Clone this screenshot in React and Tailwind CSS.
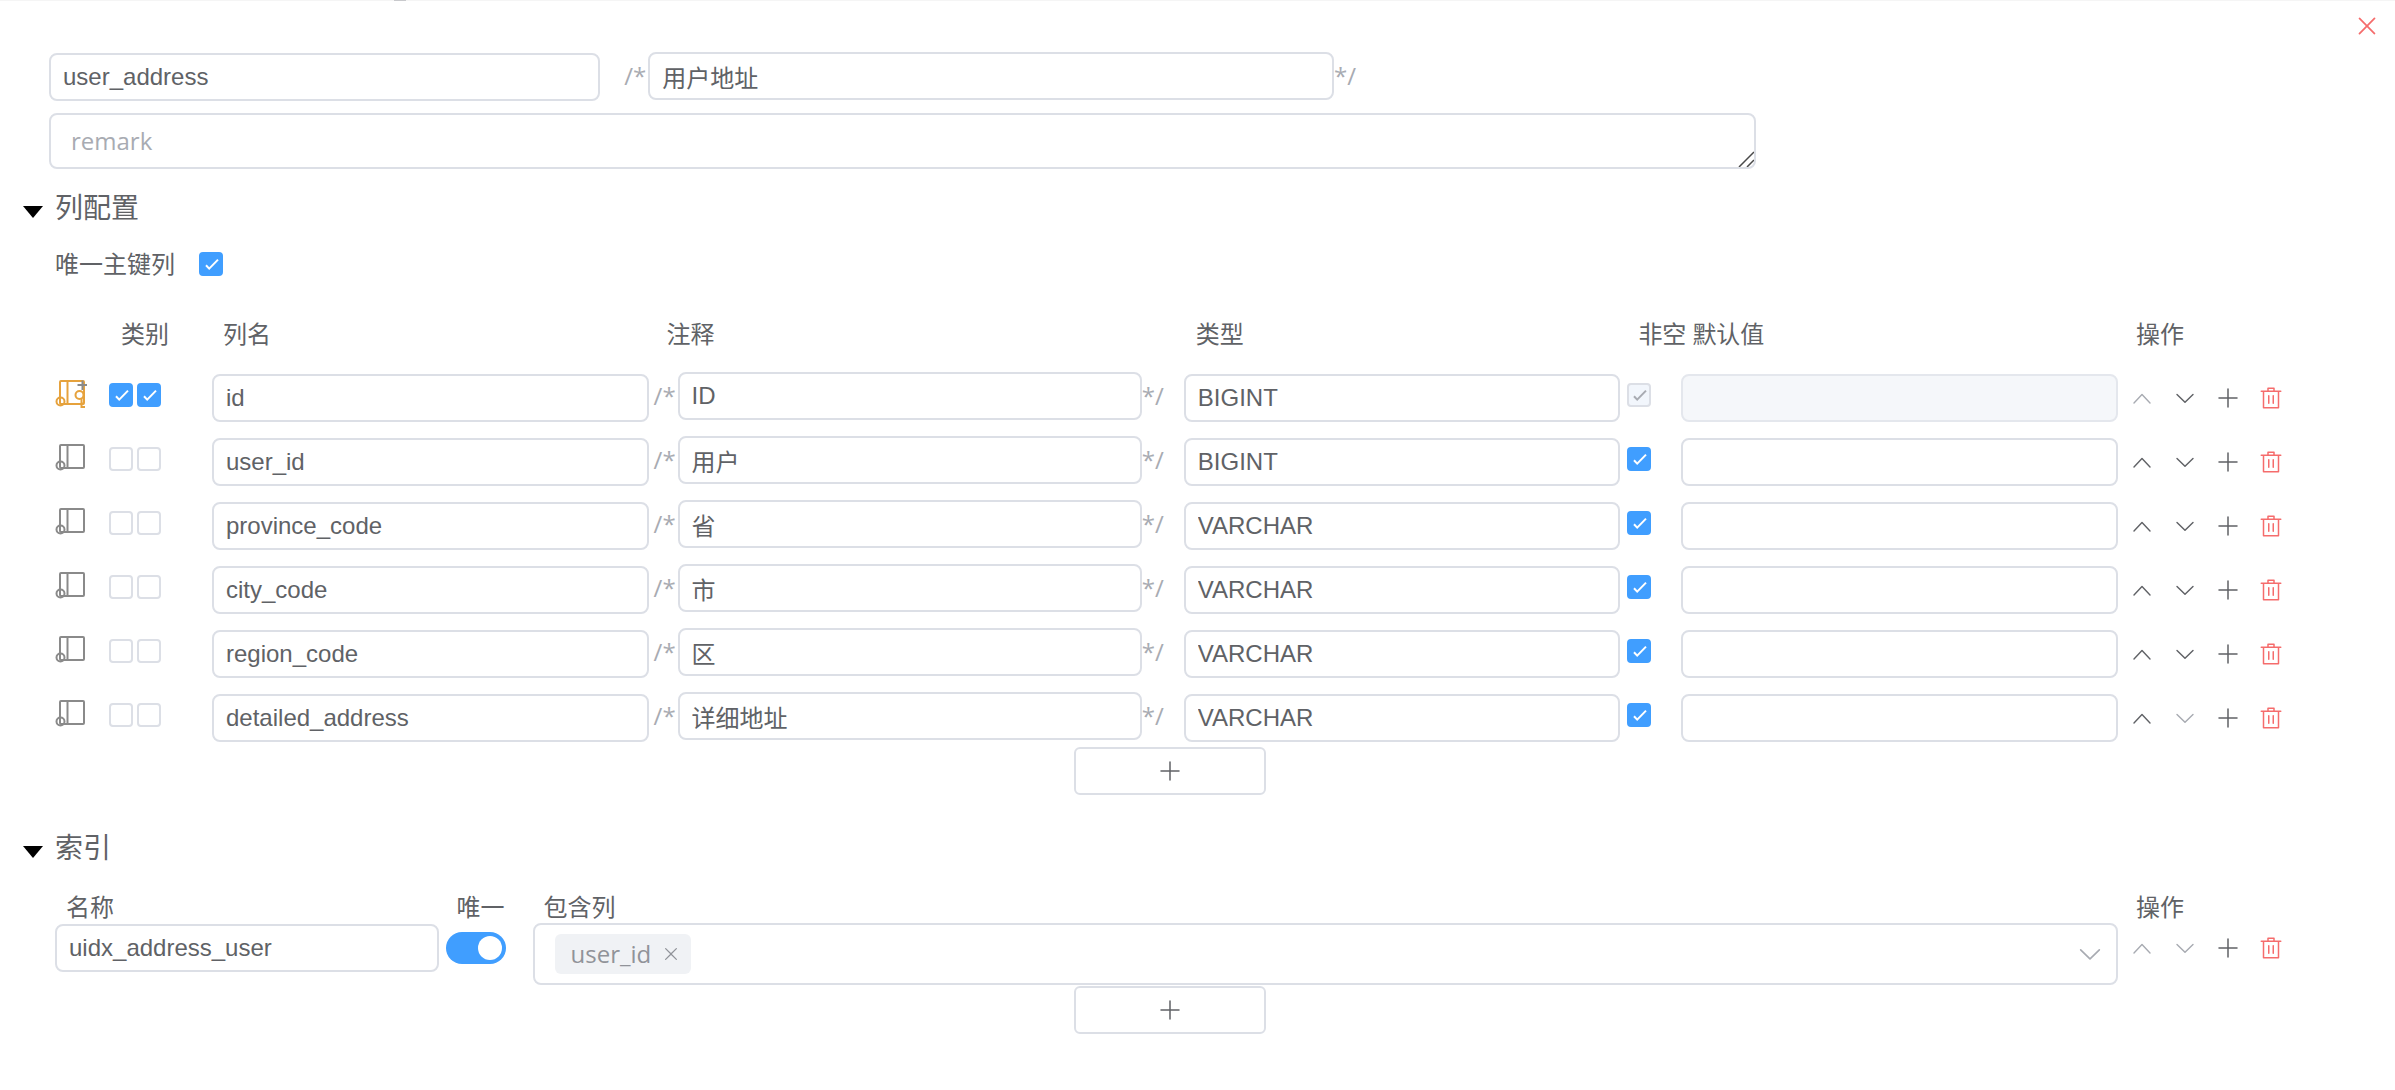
import { useState } from "react";

const ICONS = {
  up: "m488.832 344.32-339.84 356.672a32 32 0 0 0 0 44.16l.384.384a29.44 29.44 0 0 0 42.688 0l320-335.872 319.872 335.872a29.44 29.44 0 0 0 42.688 0l.384-.384a32 32 0 0 0 0-44.16L535.168 344.32a32 32 0 0 0-46.336 0z",
  down: "M831.872 340.864 512 652.672 192.128 340.864a30.592 30.592 0 0 0-42.752 0 29.12 29.12 0 0 0 0 41.6L489.664 714.24a32 32 0 0 0 44.672 0l340.288-331.712a29.12 29.12 0 0 0 0-41.728 30.592 30.592 0 0 0-42.752 0z",
  plus: "M480 480V128a32 32 0 0 1 64 0v352h352a32 32 0 1 1 0 64H544v352a32 32 0 1 1-64 0V544H128a32 32 0 0 1 0-64h352z",
  trash: "M160 256H96a32 32 0 0 1 0-64h256V95.936a32 32 0 0 1 32-32h256a32 32 0 0 1 32 32V192h256a32 32 0 1 1 0 64h-64v672a32 32 0 0 1-32 32H192a32 32 0 0 1-32-32V256zm448-64v-64H416v64h192zM224 896h576V256H224v640zm192-128a32 32 0 0 1-32-32V416a32 32 0 0 1 64 0v320a32 32 0 0 1-32 32zm192 0a32 32 0 0 1-32-32V416a32 32 0 0 1 64 0v320a32 32 0 0 1-32 32z",
  close: "M764.288 214.592 512 466.88 259.712 214.592a31.936 31.936 0 0 0-45.12 45.12L466.752 512 214.528 764.224a31.936 31.936 0 1 0 45.12 45.184L512 557.184l252.288 252.288a31.936 31.936 0 0 0 45.12-45.12L557.12 512.064l252.288-252.352a31.936 31.936 0 1 0-45.12-45.184z",
};

const COLUMNS = [
  { name: "id", comment: "ID", type: "BIGINT", primary: true },
  { name: "user_id", comment: "用户", type: "BIGINT" },
  { name: "province_code", comment: "省", type: "VARCHAR" },
  { name: "city_code", comment: "市", type: "VARCHAR" },
  { name: "region_code", comment: "区", type: "VARCHAR" },
  { name: "detailed_address", comment: "详细地址", type: "VARCHAR" },
];

function Icon({ name, className }) {
  return (
    <svg viewBox="0 0 1024 1024" fill="currentColor" aria-hidden="true" className={className}>
      <path d={ICONS[name]} />
    </svg>
  );
}

function TextInput({ label, value, disabled }) {
  return (
    <input
      type="text"
      aria-label={label}
      defaultValue={value}
      disabled={disabled}
      className="block h-12 w-full min-w-0 rounded-lg border-2 border-[#dcdfe6] bg-white px-3 font-['Liberation_Sans','Noto_Sans_CJK_SC',sans-serif] text-2xl text-[#606266] outline-none focus:border-[#409eff] disabled:border-[#e4e7ed] disabled:bg-[#f5f7fa]"
    />
  );
}

function CommentInput({ label, value }) {
  return (
    <div className="flex items-center text-2xl leading-8 text-[#a8abb2]">
      <span className="w-6 shrink-0">/*</span>
      <TextInput label={label} value={value} />
      <span className="w-6 shrink-0">*/</span>
    </div>
  );
}

function Checkbox({ label, id, checked, disabled }) {
  return (
    <span className="relative inline-block size-6 shrink-0 align-middle">
      <input
        type="checkbox"
        id={id}
        aria-label={label}
        defaultChecked={checked}
        disabled={disabled}
        className="peer block size-6 appearance-none rounded-sm border-2 border-[#dcdfe6] bg-white checked:border-[#409eff] checked:bg-[#409eff] disabled:border-[#dcdfe6] disabled:bg-[#f2f6fc]"
      />
      <svg
        viewBox="0 0 24 24"
        fill="none"
        stroke="currentColor"
        strokeWidth="2"
        aria-hidden="true"
        className="pointer-events-none absolute inset-0 hidden size-6 text-white peer-checked:block peer-disabled:text-[#a8abb2]"
      >
        <path d="M7 13.2 10.2 16.6 19 7.6" />
      </svg>
    </span>
  );
}

function ColumnIcon({ primary }) {
  return (
    <svg
      viewBox="0 0 32 32"
      fill="none"
      stroke={primary ? "#e6a23c" : "#8a8a8a"}
      strokeWidth="2"
      aria-hidden="true"
      className="size-8"
    >
      <rect x="5" y="2" width="24" height="23" rx="1" />
      <path d="M12.500 2V25" />
      <circle cx="5.500" cy="22.500" r="4" />
      {primary && (
        <>
          <circle cx="24.500" cy="16" r="4" />
          <path d="M26.500 19.500V28H30M26.500 24.500H29" />
          <path d="M27.500 1.500V11M22.500 6H32" stroke="#8a8a8a" />
        </>
      )}
    </svg>
  );
}

function RowActions({ first, last }) {
  return (
    <div className="flex h-12 items-center gap-[19px] pl-3 text-[#606266]">
      <button type="button" aria-label="上移" disabled={first} className="disabled:text-[#a8abb2]">
        <Icon name="up" className="size-6" />
      </button>
      <button type="button" aria-label="下移" disabled={last} className="disabled:text-[#a8abb2]">
        <Icon name="down" className="size-6" />
      </button>
      <button type="button" aria-label="新增">
        <Icon name="plus" className="size-6" />
      </button>
      <button type="button" aria-label="删除" className="text-[#f56c6c]">
        <Icon name="trash" className="size-6" />
      </button>
    </div>
  );
}

function AddButton({ label }) {
  return (
    <button
      type="button"
      aria-label={label}
      className="mx-auto flex h-12 w-48 items-center justify-center rounded-md border-2 border-[#dcdfe6] bg-white text-[#606266]"
    >
      <Icon name="plus" className="size-6" />
    </button>
  );
}

function Section({ title, children }) {
  return (
    <details open>
      <summary className="flex h-8 cursor-pointer list-none items-center text-[28px] leading-8">
        <svg viewBox="0 0 20 12" aria-hidden="true" className="mt-2.5 mr-3 -ml-8 h-3 w-5">
          <path d="M0 0H20L10 12Z" fill="#000" />
        </svg>
        <h2>{title}</h2>
      </summary>
      {children}
    </details>
  );
}

function ColumnRow({ column, first, last }) {
  const { name, comment, type, primary } = column;
  return (
    <tr className="h-16">
      <td className="p-0">
        <ColumnIcon primary={primary} />
      </td>
      <td className="p-0">
        <div className="flex gap-1">
          <Checkbox label={`${name} 主键`} checked={primary} />
          <Checkbox label={`${name} 自增`} checked={primary} />
        </div>
      </td>
      <td className="pt-1.5">
        <TextInput label={`${name} 列名`} value={name} />
      </td>
      <td className="pt-0.5 pr-[18px] pl-[5px]">
        <CommentInput label={`${name} 注释`} value={comment} />
      </td>
      <td className="pt-1.5">
        <TextInput label={`${name} 类型`} value={type} />
      </td>
      <td className="pl-[7px]">
        <div className="flex">
          <Checkbox label={`${name} 非空`} checked disabled={primary} />
        </div>
      </td>
      <td className="pt-1.5">
        <TextInput label={`${name} 默认值`} value="" disabled={primary} />
      </td>
      <td className="pt-1.5">
        <RowActions first={first} last={last} />
      </td>
    </tr>
  );
}

function ColumnTable() {
  return (
    <table className="w-full table-fixed text-left text-2xl leading-8">
      <colgroup>
        <col className="w-[54px]" />
        <col className="w-[103px]" />
        <col />
        <col className="w-[24%]" />
        <col />
        <col className="w-[61px]" />
        <col />
        <col className="w-[167px]" />
      </colgroup>
      <thead>
        <tr className="h-[58px] whitespace-nowrap">
          <td />
          <th scope="col" className="pl-3 font-normal">类别</th>
          <th scope="col" className="pl-[11px] font-normal">列名</th>
          <th scope="col" className="pl-[18px] font-normal">注释</th>
          <th scope="col" className="pl-3 font-normal">类型</th>
          <th scope="col" className="pl-[18px] font-normal">非空</th>
          <th scope="col" className="pl-[11px] font-normal">默认值</th>
          <th scope="col" className="pl-[18px] font-normal">操作</th>
        </tr>
      </thead>
      <tbody>
        {COLUMNS.map((column, i) => (
          <ColumnRow
            key={column.name}
            column={column}
            first={i === 0}
            last={i === COLUMNS.length - 1}
          />
        ))}
      </tbody>
    </table>
  );
}

function Switch({ label }) {
  const [on, setOn] = useState(true);
  return (
    <button
      type="button"
      role="switch"
      aria-checked={on}
      aria-label={label}
      onClick={() => setOn(!on)}
      className={
        on
          ? "flex h-8 w-[60px] items-center justify-end rounded-full bg-[#409eff] px-1"
          : "flex h-8 w-[60px] items-center justify-start rounded-full bg-[#dcdfe6] px-1"
      }
    >
      <span className="size-6 rounded-full bg-white" />
    </button>
  );
}

function IndexTable() {
  return (
    <table className="w-full table-fixed text-left text-2xl leading-8">
      <colgroup>
        <col className="w-[17.2%]" />
        <col className="w-[94px]" />
        <col />
        <col className="w-[167px]" />
      </colgroup>
      <thead>
        <tr className="whitespace-nowrap">
          <th scope="col" className="pt-7 pl-[11px] font-normal">名称</th>
          <th scope="col" className="pt-7 pl-[18px] font-normal">唯一</th>
          <th scope="col" className="pt-7 pl-[11px] font-normal">包含列</th>
          <th scope="col" className="pt-7 pl-[18px] font-normal">操作</th>
        </tr>
      </thead>
      <tbody>
        <tr className="h-[63px] align-top">
          <td className="pt-px">
            <TextInput label="索引名称" value="uidx_address_user" />
          </td>
          <td className="pt-px pl-[7px]">
            <div className="flex h-12 items-center">
              <Switch label="唯一" />
            </div>
          </td>
          <td>
            <div className="flex h-[62px] items-center justify-between rounded-lg border-2 border-[#dcdfe6] pr-3 pl-5">
              <span className="flex h-10 items-center gap-2.5 rounded-md bg-[#f0f2f5] pr-2.5 pl-4 text-[#909399]">
                user_id
                <button type="button" aria-label="移除 user_id">
                  <Icon name="close" className="size-5" />
                </button>
              </span>
              <button type="button" role="combobox" aria-expanded="false" aria-label="包含列" className="text-[#a8abb2]">
                <Icon name="down" className="size-7" />
              </button>
            </div>
          </td>
          <td className="pt-px">
            <RowActions first last />
          </td>
        </tr>
      </tbody>
    </table>
  );
}

export default function App() {
  return (
    <div className="min-h-screen bg-white font-['Open_Sans','Noto_Sans_CJK_SC',sans-serif] text-[#606266]">
      <div className="h-px bg-[#f5f5f5] pl-[394px]">
        <div className="h-px w-3 bg-[#c8c9cc]" />
      </div>
      <header className="flex h-[51px] justify-end pt-[11px] pr-3.5">
        <button type="button" aria-label="关闭" className="size-7 text-[#f56c6c]">
          <Icon name="close" className="size-7" />
        </button>
      </header>
      <main>
        <form className="w-[73.3%] pl-[49px]">
          <div className="flex">
            <div className="w-[32.3%] pt-px">
              <TextInput label="表名" value="user_address" />
            </div>
            <div className="ml-6 w-[43%]">
              <CommentInput label="表注释" value="用户地址" />
            </div>
          </div>
          <div className="relative mt-3 h-14">
            <textarea
              aria-label="备注"
              placeholder="remark"
              rows={1}
              className="block h-14 w-full resize-none rounded-lg border-2 border-[#dcdfe6] px-5 py-2.5 text-2xl leading-8 outline-none placeholder:text-[#a8abb2]"
            />
            <svg viewBox="0 0 16 16" aria-hidden="true" className="pointer-events-none absolute right-0.5 bottom-0.5 size-4">
              <path d="M1 16 16 1M9 16 16 9" fill="none" stroke="#4a4a4a" strokeWidth="1.500" />
            </svg>
          </div>
        </form>

        <div className="pt-[22px] pr-[110px] pl-[55px]">
          <Section title="列配置">
            <div className="flex h-[82px] items-center gap-6 text-2xl leading-8">
              <label htmlFor="single-key">唯一主键列</label>
              <Checkbox id="single-key" label="唯一主键列" checked />
            </div>
            <ColumnTable />
            <AddButton label="新增列" />
          </Section>
          <div className="pt-9">
            <Section title="索引">
              <IndexTable />
              <AddButton label="新增索引" />
            </Section>
          </div>
        </div>
      </main>
    </div>
  );
}
